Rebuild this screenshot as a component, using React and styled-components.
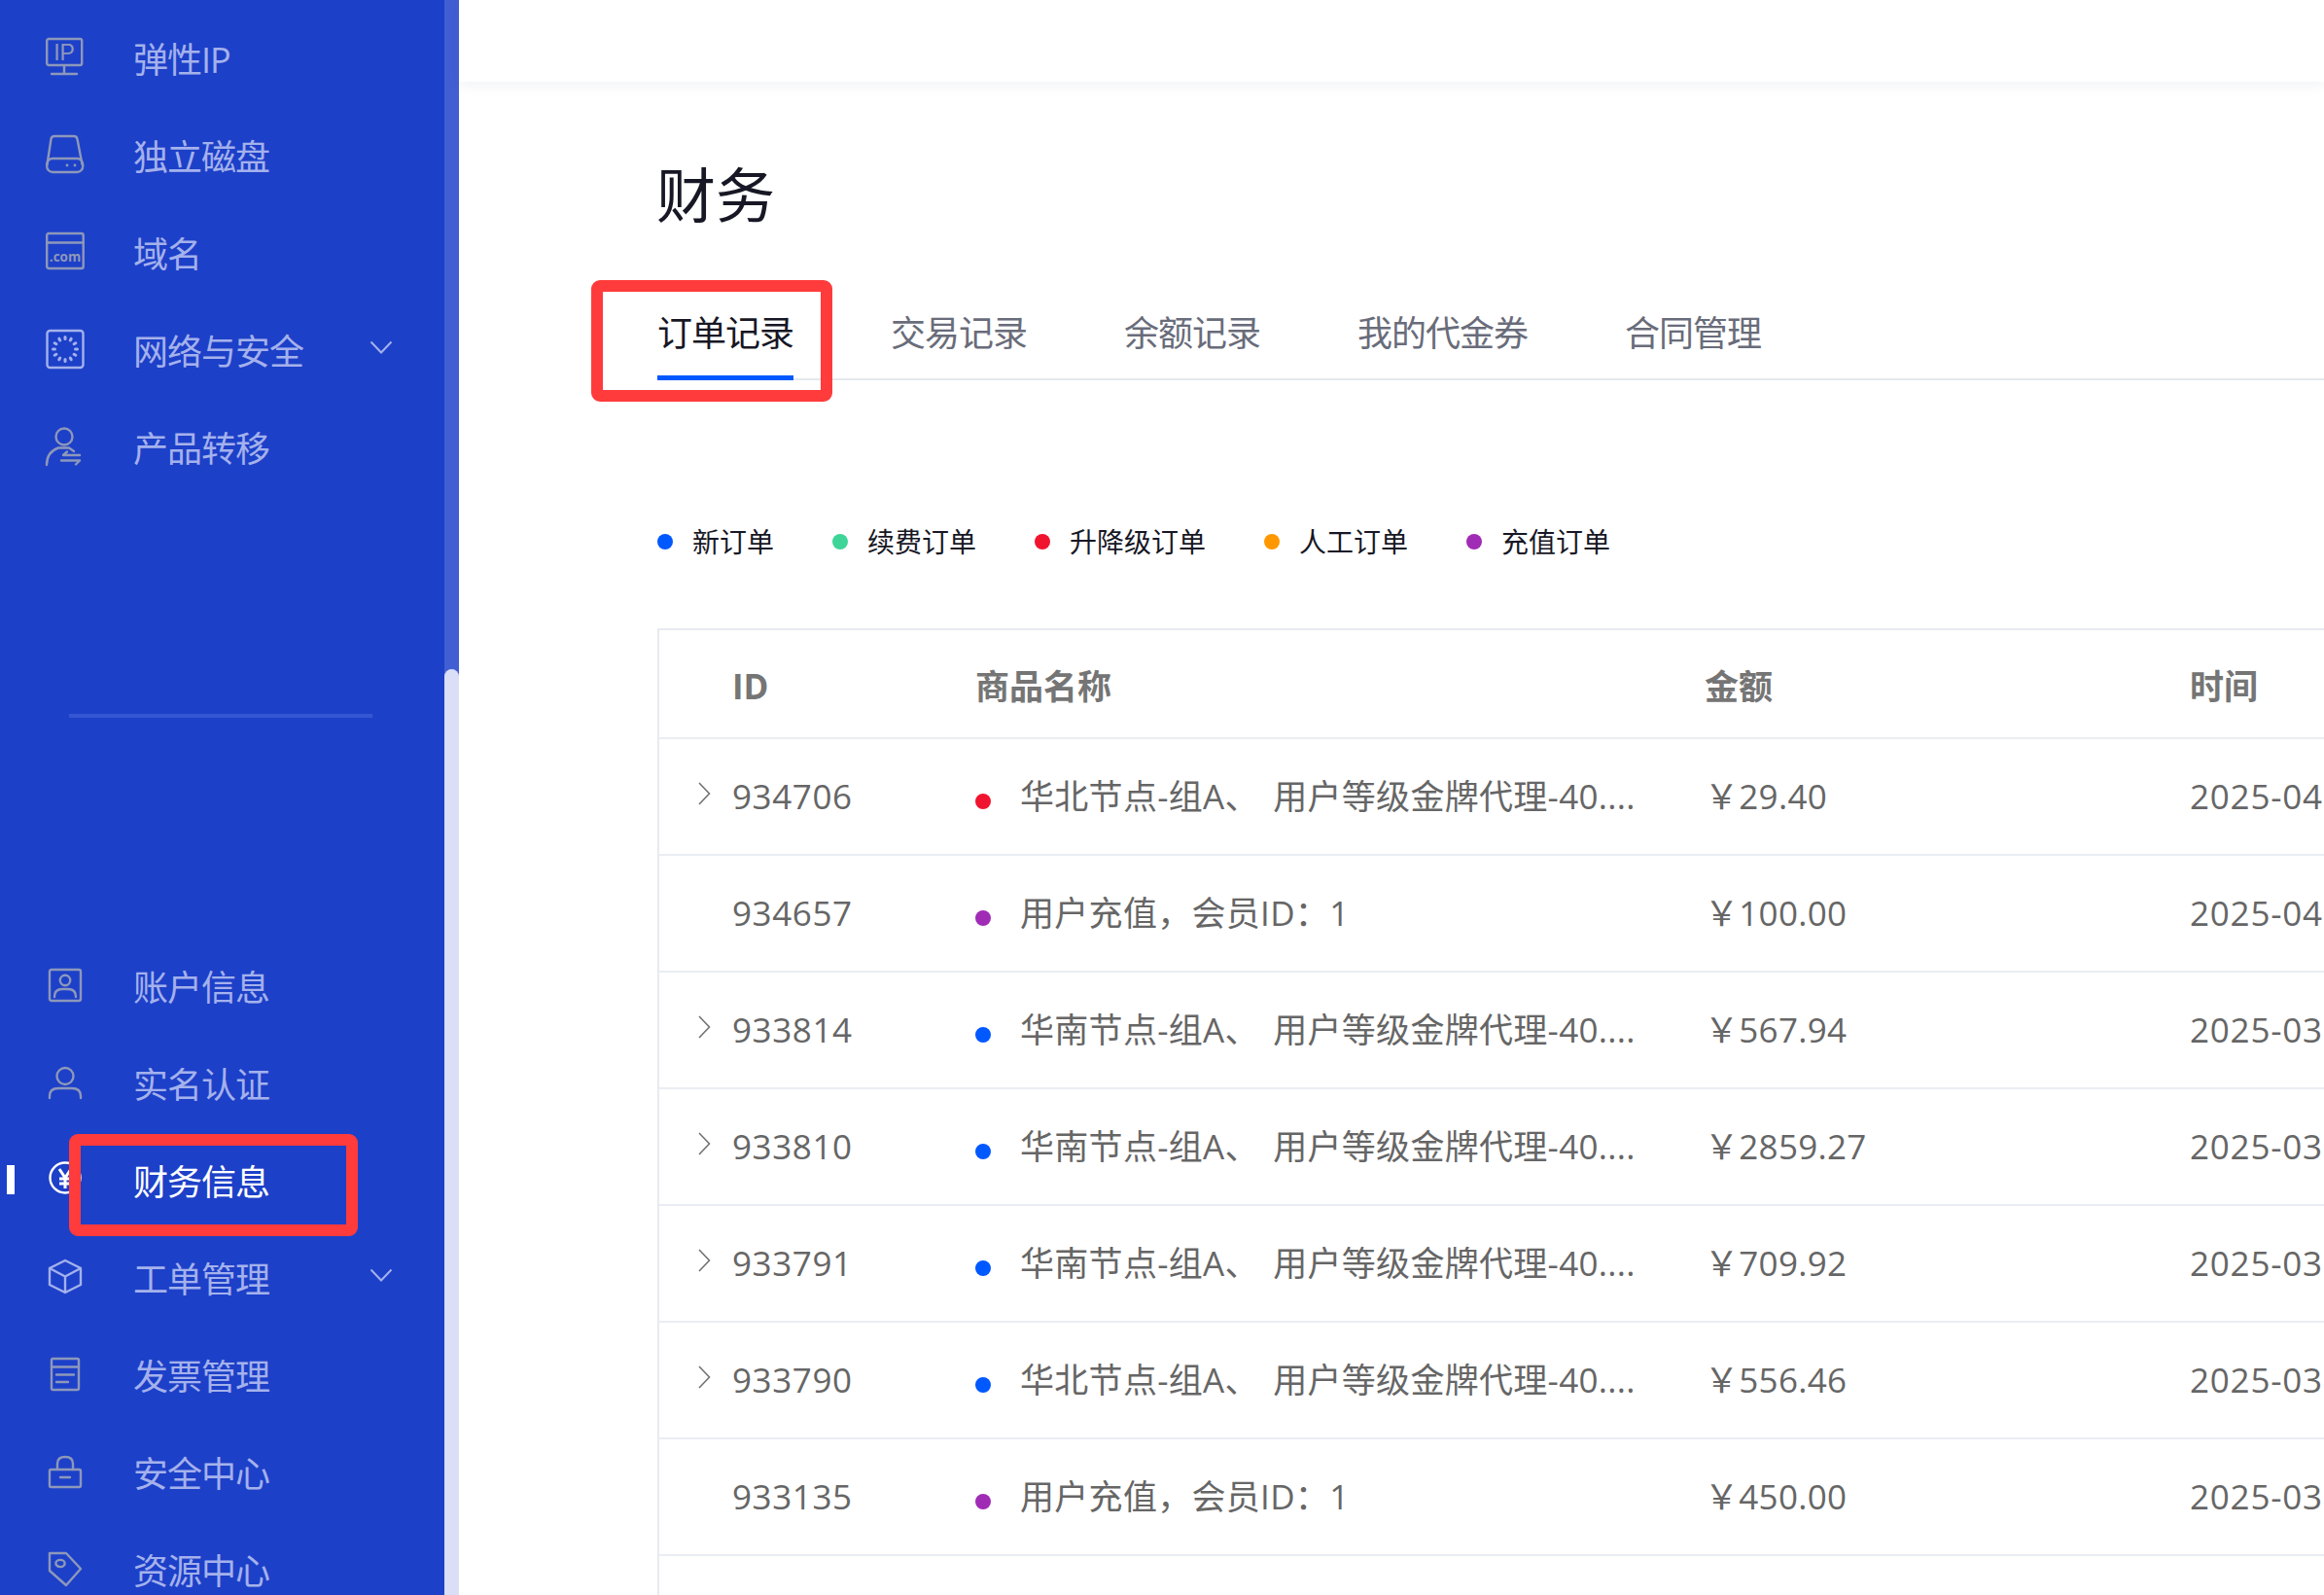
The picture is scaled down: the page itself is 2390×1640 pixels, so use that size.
import React from 'react'
import styled, { createGlobalStyle } from 'styled-components'

const GlobalStyle = createGlobalStyle`
    html, body {
        margin: 0;
        padding: 0;
        background: #fff;
        overflow: hidden;
    }
    * {
        box-sizing: border-box;
    }
    body {
        font-family: "Open Sans", "Noto Sans CJK SC", sans-serif;
    }
`

const Page = styled.div`
    position: relative;
    display: flex;
    width: 2390px;
    height: 1640px;
    overflow: hidden;
`

const Sidebar = styled.aside`
    width: 457px;
    flex-shrink: 0;
    background: #1d40c8;
    overflow: hidden;
`

const NavList = styled.nav`
    padding-top: ${(p) => p.$top}px;
`

const NavItem = styled.div`
    position: relative;
    height: 100px;
    display: flex;
    align-items: center;
    padding-left: 47px;
    padding-top: 3px;
    font-size: 36px;
    line-height: 50px;
    letter-spacing: -1px;
    color: ${(p) => (p.$active ? '#fff' : '#a4b1ec')};
`

const ActiveBar = styled.span`
    position: absolute;
    left: 7px;
    top: 34px;
    width: 8px;
    height: 30px;
    background: #fff;
`

const IconBox = styled.span`
    width: 40px;
    height: 40px;
    margin-top: -7px;
    flex-shrink: 0;
    display: block;
    svg {
        display: block;
        overflow: visible;
    }
`

const NavLabel = styled.span`
    margin-left: 50px;
    flex: 1;
`

const Caret = styled.svg`
    width: 24px;
    height: 14px;
    margin-right: 53px;
    margin-top: -9px;
`

const Divider = styled.div`
    width: 312px;
    height: 4px;
    margin: 224px 0 226px 71px;
    background: #3556d3;
`

const ScrollTrack = styled.div`
    width: 15px;
    flex-shrink: 0;
    padding-top: 688px;
    background: #415fd3;
`

const ScrollThumb = styled.div`
    height: 100%;
    background: #dadef7;
    border-radius: 8px 8px 0 0;
`

const Main = styled.main`
    flex: 1;
    min-width: 0;
    display: flex;
    flex-direction: column;
`

const TopBar = styled.header`
    height: 84px;
    flex-shrink: 0;
    box-shadow: 0 2px 14px rgba(30, 40, 80, 0.07);
`

const Content = styled.div`
    flex: 1;
    min-height: 0;
    display: flex;
    flex-direction: column;
    padding-left: 204px;
`

const Title = styled.h1`
    margin: 72px 0 0 -1px;
    font-size: 61px;
    font-weight: 400;
    line-height: 90px;
    color: #171725;
`

const Tabs = styled.div`
    margin-top: 71px;
    display: flex;
    gap: 100px;
    border-bottom: 2px solid #e5e8ee;
`

const Tab = styled.div`
    position: relative;
    height: 72px;
    font-size: 36px;
    letter-spacing: -1px;
    line-height: 52px;
    color: ${(p) => (p.$active ? '#171725' : '#696c7a')};
    &::after {
        content: '';
        display: ${(p) => (p.$active ? 'block' : 'none')};
        position: absolute;
        left: 0;
        right: 0;
        bottom: -2px;
        height: 5px;
        background: #0058ff;
    }
`

const Legend = styled.div`
    margin-top: 145px;
    display: flex;
    gap: 60px;
`

const LegendItem = styled.div`
    display: flex;
    align-items: center;
    gap: 20px;
    font-size: 28px;
    line-height: 42px;
    color: #171725;
`

const Dot = styled.i`
    display: block;
    width: 16px;
    height: 16px;
    flex-shrink: 0;
    border-radius: 50%;
    background: ${(p) => p.$color};
`

const TableWrap = styled.div`
    margin-top: 68px;
    flex: 1;
    width: 2000px;
    border-left: 2px solid #e8eaf0;
    border-top: 2px solid #e8eaf0;
`

const Row = styled.div`
    display: grid;
    grid-template-columns: 75px 250px 750px 499px 1fr;
    align-items: center;
    height: ${(p) => (p.$head ? 112 : 120)}px;
    padding: ${(p) => (p.$head ? '6px 0 0' : '0 0 1px')};
    border-bottom: 2px solid #eaedf3;
    font-size: 35px;
    line-height: 50px;
    font-weight: ${(p) => (p.$head ? 700 : 400)};
    color: ${(p) => (p.$head ? '#757575' : '#666')};
`

const ExpandCell = styled.div`
    display: flex;
    padding-left: 40px;
    margin-top: -5px;
`

const IdCell = styled.div`
    letter-spacing: 0.6px;
`

const NameCell = styled.div`
    display: flex;
    align-items: center;
    gap: 30px;
    white-space: nowrap;
    word-spacing: 5px;
    letter-spacing: 0.3px;
    ${Dot} {
        margin-top: 11px;
    }
`

const AmountCell = styled.div`
    letter-spacing: 0.3px;
`

const DateCell = styled.div`
    white-space: nowrap;
    letter-spacing: 0.8px;
`

// the red boxes somebody drew on top of the screenshot
const Marker = styled.div`
    position: absolute;
    left: ${(p) => p.$x}px;
    top: ${(p) => p.$y}px;
    width: ${(p) => p.$w}px;
    height: ${(p) => p.$h}px;
    border: 12px solid #ff3b3b;
    border-radius: 9px;
`

const Icon = ({ children, color = '#8d98ba' }) => (
    <IconBox>
        <svg width="40" height="40" viewBox="0 0 40 40" fill="none" stroke={color} strokeWidth="2.4" strokeLinejoin="round" strokeLinecap="round">
            {children}
        </svg>
    </IconBox>
)

const IpIcon = () => (
    <Icon>
        <rect x="1.2" y="2" width="36" height="27" rx="2" />
        <path d="M19 30v7M6 38h26" />
        <text x="19" y="24" textAnchor="middle" fontSize="23" fontFamily="Liberation Sans" letterSpacing="0" fill="#8d98ba" stroke="none">IP</text>
    </Icon>
)

const DiskIcon = () => (
    <Icon>
        <path d="M1.5 31 5.5 5Q6 2 9 2H29Q32 2 32.5 5L37.5 31" />
        <rect x="1.2" y="25" width="37" height="14" rx="6" />
        <circle cx="22" cy="32" r="1.4" fill="#8d98ba" stroke="none" />
        <circle cx="30" cy="32" r="1.4" fill="#8d98ba" stroke="none" />
    </Icon>
)

const ComIcon = () => (
    <Icon>
        <rect x="1.2" y="2" width="37.5" height="36" rx="2" />
        <path d="M1.2 11.5H38.7" />
        <text x="20" y="31" textAnchor="middle" fontSize="13.5" fontWeight="700" fontFamily="Open Sans" letterSpacing="0" fill="#8d98ba" stroke="none">.com</text>
    </Icon>
)

const spokes = [0, 30, 60, 90, 120, 150, 180, 210, 240, 270, 300, 330]

const NetIcon = () => (
    <Icon color="#a4b1ec">
        <rect x="1.5" y="2" width="37" height="38" rx="3" />
        {spokes.map((a) => (
            <path key={a} d="M20 8.5V10.5" strokeWidth="3" transform={`rotate(${a} 20 21)`} />
        ))}
    </Icon>
)

const TransferIcon = () => (
    <Icon>
        <circle cx="19" cy="11" r="8.5" />
        <path d="M1 40C1 31 6 25 13 22.5H24L29 26" />
        <path d="M35 30H18L22 26.5M16 35.5H35L31 39.5" />
    </Icon>
)

const AccountIcon = () => (
    <Icon>
        <rect x="4" y="5" width="32" height="32" rx="2" />
        <circle cx="20" cy="16" r="5.2" />
        <path d="M9 33Q9 25 17 25H23Q31 25 31 33" />
    </Icon>
)

const PersonIcon = () => (
    <Icon>
        <circle cx="20" cy="14.5" r="8.5" />
        <path d="M4 37V35Q4 27 13 27H27Q36 27 36 35V37" />
    </Icon>
)

const YenIcon = () => (
    <Icon color="#fff">
        <circle cx="20" cy="19" r="15.5" />
        <path strokeWidth="3" strokeLinecap="butt" d="M14 10 20 19 26 10M14 20H26M14 25H26M20 19V30" />
    </Icon>
)

const CubeIcon = () => (
    <Icon color="#a4b1ec">
        <path d="M20 4 36 12V29L20 37 4 29V12ZM4 12 20 20.5 36 12M20 20.5V37" />
    </Icon>
)

const InvoiceIcon = () => (
    <Icon>
        <rect x="6" y="5" width="28" height="32" rx="1.5" />
        <path d="M6 13.5H34M11 21.5H29M11 29H23" />
    </Icon>
)

const LockIcon = () => (
    <Icon>
        <rect x="4" y="19" width="32" height="18" rx="1.5" />
        <path d="M12 19V13Q12 6 20 6 28 6 28 13V19M15 27H25" />
    </Icon>
)

const TagIcon = () => (
    <Icon>
        <path d="M4 5H21L36 21 21 38 4 23Z" />
        <ellipse cx="15" cy="15.5" rx="4.6" ry="3.6" />
    </Icon>
)

const CaretDown = () => (
    <Caret viewBox="0 0 24 14" fill="none" stroke="#a4b1ec" strokeWidth="2">
        <path d="M1.5 1.5 12 12.5 22.5 1.5" />
    </Caret>
)

const ExpandArrow = () => (
    <svg width="13" height="24" viewBox="0 0 13 24" fill="none" stroke="#737373" strokeWidth="1.6">
        <path d="M1 1 11.5 12 1 23" />
    </svg>
)

const topNav = [
    { label: '弹性IP', icon: IpIcon },
    { label: '独立磁盘', icon: DiskIcon },
    { label: '域名', icon: ComIcon },
    { label: '网络与安全', icon: NetIcon, caret: true },
    { label: '产品转移', icon: TransferIcon },
]

const bottomNav = [
    { label: '账户信息', icon: AccountIcon },
    { label: '实名认证', icon: PersonIcon },
    { label: '财务信息', icon: YenIcon, active: true },
    { label: '工单管理', icon: CubeIcon, caret: true },
    { label: '发票管理', icon: InvoiceIcon },
    { label: '安全中心', icon: LockIcon },
    { label: '资源中心', icon: TagIcon },
]

const tabs = ['订单记录', '交易记录', '余额记录', '我的代金券', '合同管理']

const BLUE = '#0058ff'
const GREEN = '#3dd598'
const RED = '#f0142f'
const ORANGE = '#ff9800'
const PURPLE = '#a02bb5'

const legend = [
    { label: '新订单', color: BLUE },
    { label: '续费订单', color: GREEN },
    { label: '升降级订单', color: RED },
    { label: '人工订单', color: ORANGE },
    { label: '充值订单', color: PURPLE },
]

const NORTH = '华北节点-组A、 用户等级金牌代理-40....'
const SOUTH = '华南节点-组A、 用户等级金牌代理-40....'
const TOPUP = '用户充值，会员ID：1'

const orders = [
    { id: 934706, name: NORTH, color: RED, amount: '29.40', date: '2025-04', more: true },
    { id: 934657, name: TOPUP, color: PURPLE, amount: '100.00', date: '2025-04' },
    { id: 933814, name: SOUTH, color: BLUE, amount: '567.94', date: '2025-03', more: true },
    { id: 933810, name: SOUTH, color: BLUE, amount: '2859.27', date: '2025-03', more: true },
    { id: 933791, name: SOUTH, color: BLUE, amount: '709.92', date: '2025-03', more: true },
    { id: 933790, name: NORTH, color: BLUE, amount: '556.46', date: '2025-03', more: true },
    { id: 933135, name: TOPUP, color: PURPLE, amount: '450.00', date: '2025-03' },
]

const renderNav = (items) =>
    items.map((item) => {
        const ItemIcon = item.icon
        return (
            <NavItem key={item.label} $active={item.active}>
                {item.active && <ActiveBar />}
                <ItemIcon />
                <NavLabel>{item.label}</NavLabel>
                {item.caret && <CaretDown />}
            </NavItem>
        )
    })

const App = () => {
    return (
        <Page>
            <GlobalStyle />
            <Sidebar>
                <NavList $top={10}>{renderNav(topNav)}</NavList>
                <Divider />
                <NavList $top={0}>{renderNav(bottomNav)}</NavList>
            </Sidebar>
            <ScrollTrack>
                <ScrollThumb />
            </ScrollTrack>
            <Main>
                <TopBar />
                <Content>
                    <Title>财务</Title>
                    <Tabs>
                        {tabs.map((tab, i) => (
                            <Tab key={tab} $active={i === 0}>{tab}</Tab>
                        ))}
                    </Tabs>
                    <Legend>
                        {legend.map((item) => (
                            <LegendItem key={item.label}>
                                <Dot $color={item.color} />
                                {item.label}
                            </LegendItem>
                        ))}
                    </Legend>
                    <TableWrap>
                        <Row $head>
                            <div />
                            <div>ID</div>
                            <div>商品名称</div>
                            <div>金额</div>
                            <div>时间</div>
                        </Row>
                        {orders.map((order) => (
                            <Row key={order.id}>
                                <ExpandCell>{order.more && <ExpandArrow />}</ExpandCell>
                                <IdCell>{order.id}</IdCell>
                                <NameCell>
                                    <Dot $color={order.color} />
                                    <span>{order.name}</span>
                                </NameCell>
                                <AmountCell>￥{order.amount}</AmountCell>
                                <DateCell>{order.date}</DateCell>
                            </Row>
                        ))}
                    </TableWrap>
                </Content>
            </Main>
            <Marker $x={608} $y={288} $w={248} $h={125} />
            <Marker $x={71} $y={1166} $w={297} $h={105} />
        </Page>
    )
}

export default App
